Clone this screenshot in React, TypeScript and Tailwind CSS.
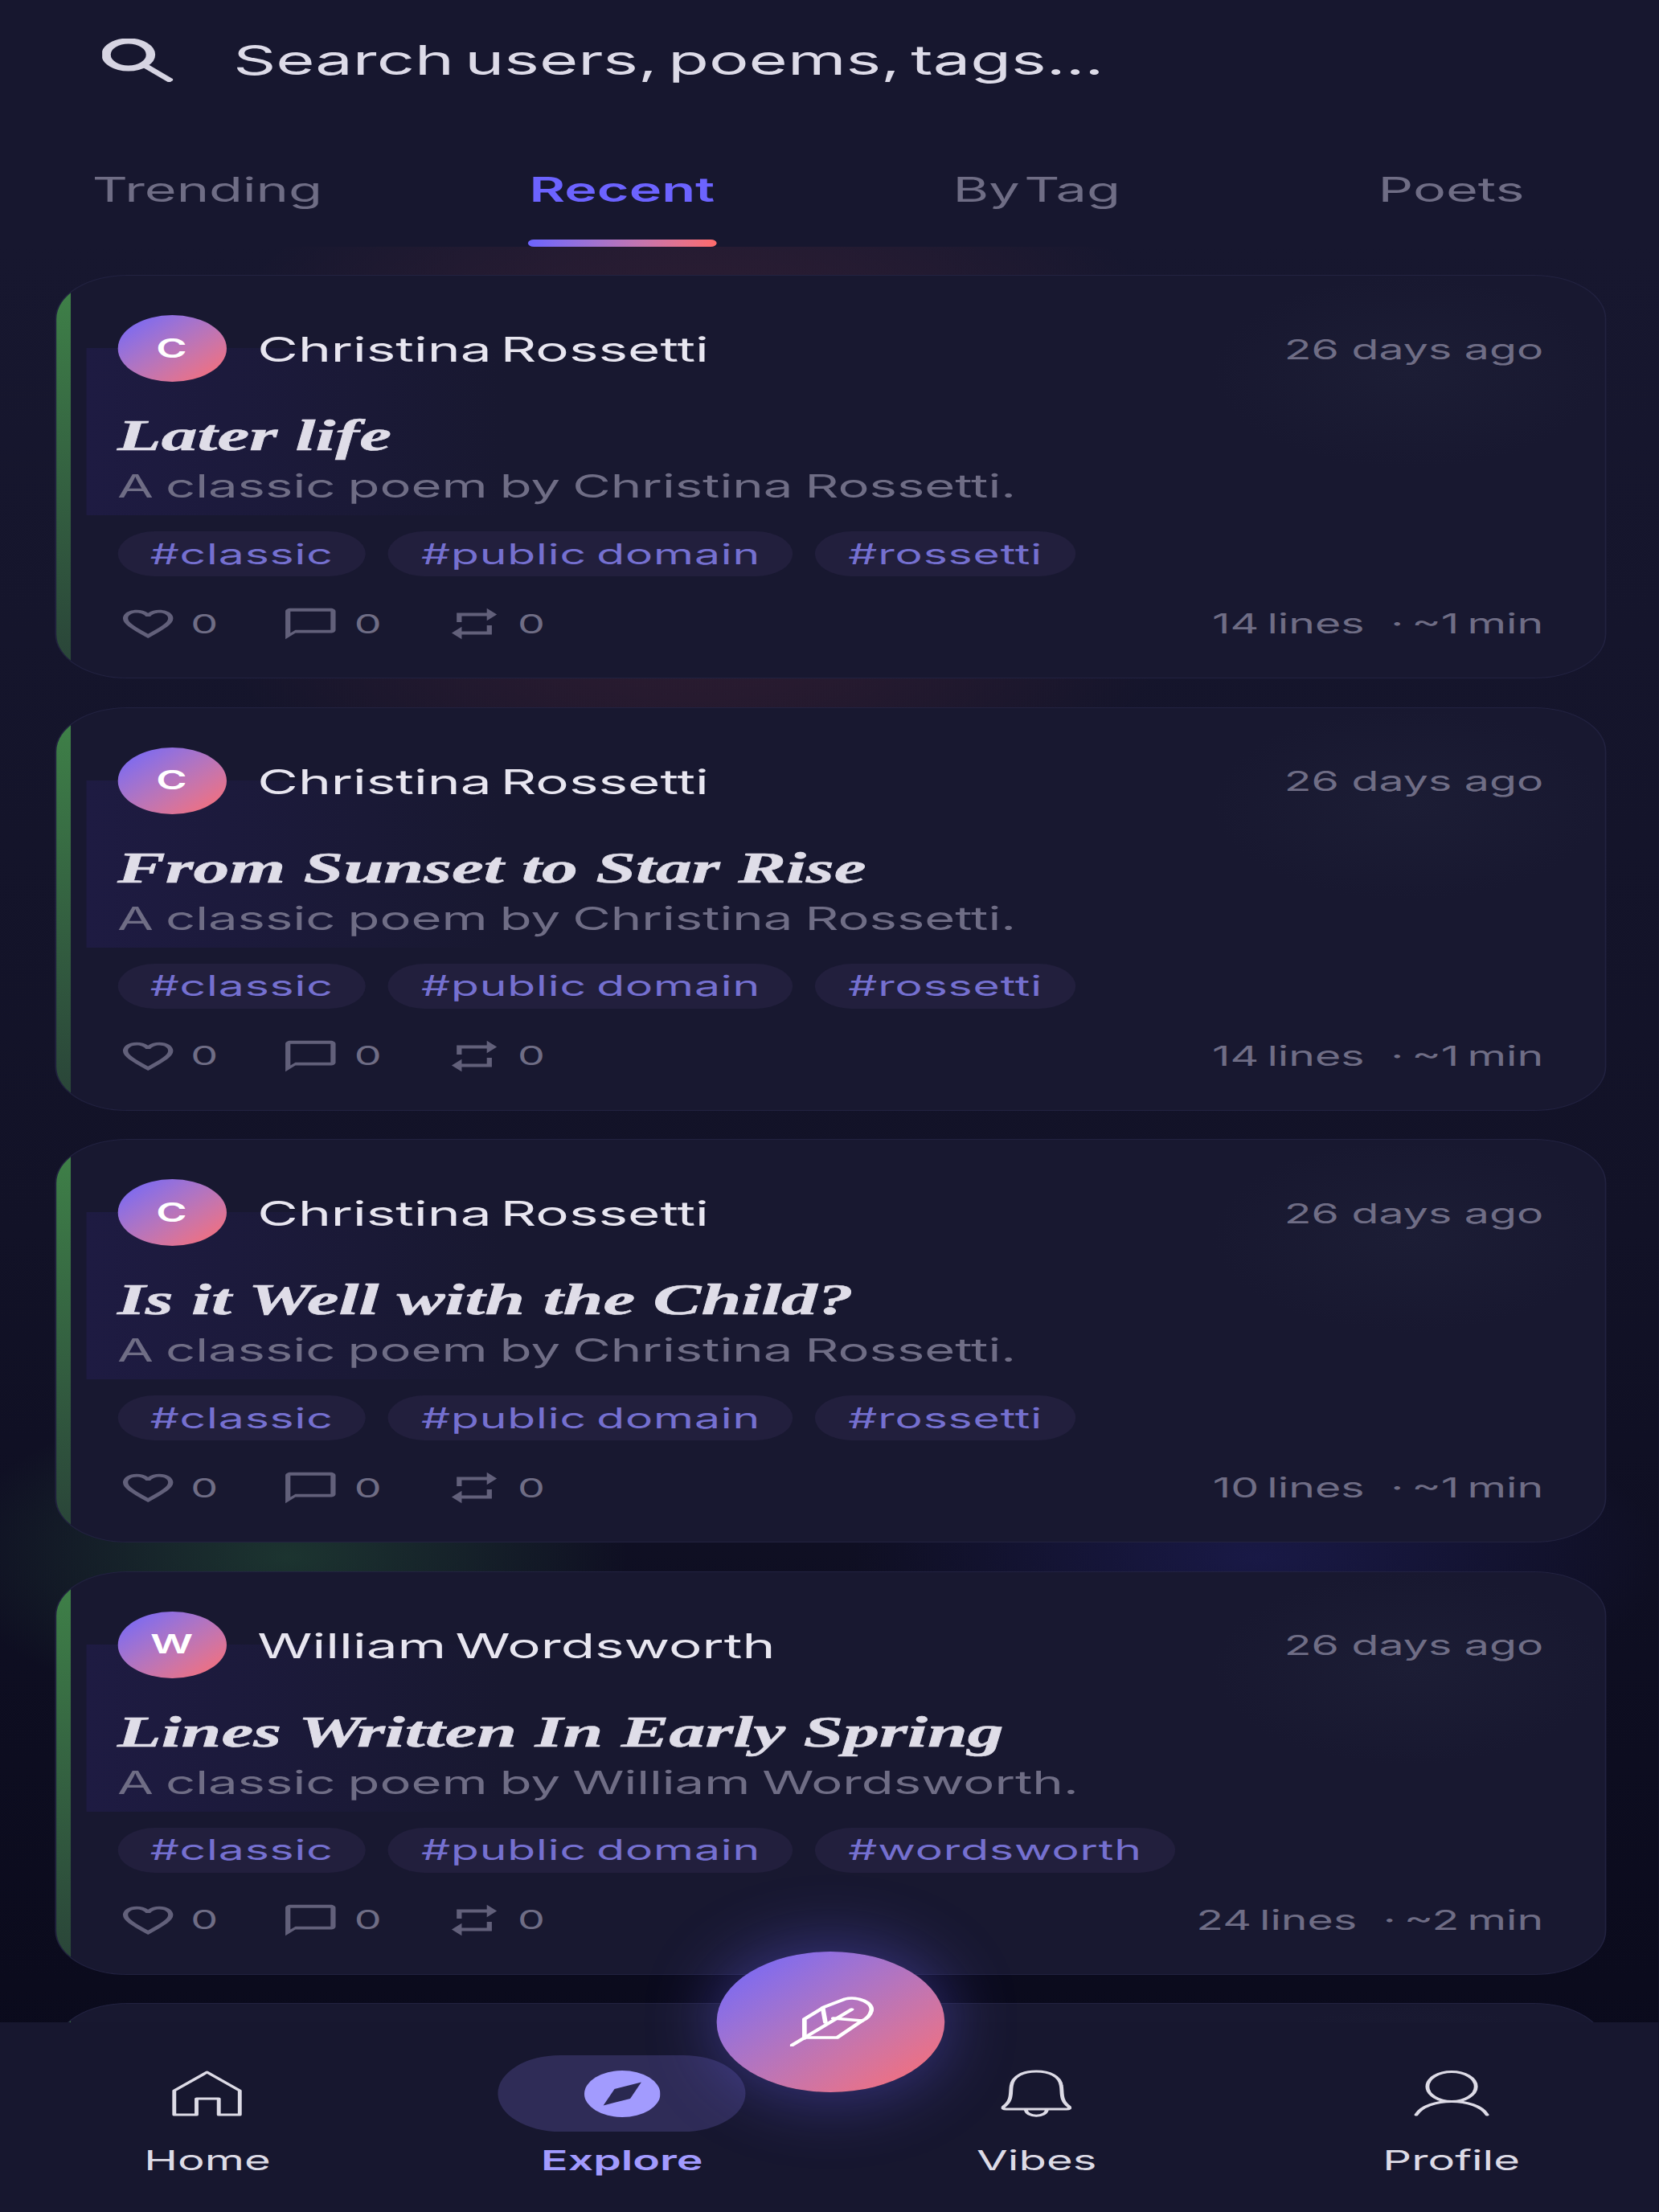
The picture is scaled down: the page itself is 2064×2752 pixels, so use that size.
import { MdFavoriteBorder, MdChatBubbleOutline, MdRepeat } from "react-icons/md";

const sans = "font-['Inter','Liberation_Sans',sans-serif]";

type Post = { name: string; initial: string; title: string; author: string; third: string; lines: string; dot: string };

const posts: Post[] = [
  { name: "Christina Rossetti", initial: "C", title: "Later life", author: "Christina Rossetti", third: "#rossetti", lines: "14 lines", dot: "~1 min" },
  { name: "Christina Rossetti", initial: "C", title: "From Sunset to Star Rise", author: "Christina Rossetti", third: "#rossetti", lines: "14 lines", dot: "~1 min" },
  { name: "Christina Rossetti", initial: "C", title: "Is it Well with the Child?", author: "Christina Rossetti", third: "#rossetti", lines: "10 lines", dot: "~1 min" },
  { name: "William Wordsworth", initial: "W", title: "Lines Written In Early Spring", author: "William Wordsworth", third: "#wordsworth", lines: "24 lines", dot: "~2 min" },
];

function Tag({ children }: { children: string }) {
  return (
    <span className="flex h-[56px] items-center rounded-full bg-[#221f3d] px-[25px] text-[35px] leading-none tracking-[0.015em] text-[#7570d0] [word-spacing:-0.08em]">
      {children}
    </span>
  );
}

function Stat({ icon }: { icon: React.ReactNode }) {
  return (
    <div className="flex items-center gap-[10px]">
      {icon}
      <span className="text-[33px] leading-none text-[#6f6d85]">0</span>
    </div>
  );
}

function CardShell({ children }: { children?: React.ReactNode }) {
  return (
    <article className="relative h-[502px] shrink-0 overflow-hidden rounded-[55px] border border-[#222240] bg-[#181830]">
      <div className="absolute top-0 bottom-0 left-0 w-[11px] bg-gradient-to-b from-[#3f8248] to-[#294338]" />
      <div className="absolute top-[90px] left-[23px] h-[208px] w-[320px] bg-gradient-to-r from-[#1e1b42] to-transparent" />
      <div className="absolute top-0 right-0 h-[240px] w-[300px] bg-[radial-gradient(closest-side,#1c1d35,transparent)]" />
      {children}
    </article>
  );
}

function Card({ p }: { p: Post }) {
  return (
    <CardShell>
      <div className="relative flex h-full flex-col pt-[49px] pr-[47px] pl-[46.5px]">
        <div className="flex h-[83px] items-center">
          <div className="flex h-[83px] w-[83px] items-center justify-center rounded-full bg-gradient-to-br from-[#6c63ff] to-[#ff6b6b] text-[32px] font-semibold text-white">
            {p.initial}
          </div>
          <span className="mt-[4px] ml-[24px] text-[42.5px] leading-none text-[#e8e6f0] [word-spacing:-0.12em]">{p.name}</span>
          <span className="mt-[2px] ml-auto text-[34px] leading-none text-[#6f6d85]">26 days ago</span>
        </div>
        <h2 className="mt-[37px] h-[60px] font-['Liberation_Serif',serif] text-[55px] leading-[60px] font-bold text-[#dfdde8] italic [-webkit-text-stroke:0.6px_#dfdde8]">
          {p.title}
        </h2>
        <p className="mt-[10px] h-[46px] text-[40px] leading-[46px] text-[#6f6d85] [word-spacing:-0.05em]">A classic poem by {p.author}.</p>
        <div className="mt-[33px] flex gap-[17px]">
          <Tag>#classic</Tag>
          <Tag>#public domain</Tag>
          <Tag>{p.third}</Tag>
        </div>
        <div className="mt-[34px] flex h-[50px] items-center">
          <div className="flex items-center gap-[48px]">
            <Stat icon={<MdFavoriteBorder size={46} color="#62607a" />} />
            <Stat icon={<MdChatBubbleOutline size={46} color="#62607a" />} />
            <Stat icon={<MdRepeat size={46} color="#62607a" />} />
          </div>
          <span className="ml-auto text-[34px] leading-none text-[#6f6d85] [word-spacing:-0.1em]">
            {p.lines}
            <span className="ml-[20px]">·</span> {p.dot}
          </span>
        </div>
      </div>
    </CardShell>
  );
}

function NavItem({ icon, label, active }: { icon: React.ReactNode; label: string; active?: boolean }) {
  return (
    <div className="flex flex-col items-center pt-[41px]">
      <div
        className={
          active
            ? "flex h-[95px] w-[189px] items-center justify-center rounded-full bg-[#2f2c57]"
            : "flex h-[95px] w-[189px] items-center justify-center"
        }
      >
        {icon}
      </div>
      <span
        className={
          active
            ? "mt-[14px] text-[34px] leading-[44px] font-semibold text-[#a29bfe]"
            : "mt-[14px] text-[34.5px] leading-[44px] text-[#dddbe6]"
        }
      >
        {label}
      </span>
    </div>
  );
}

export default function App() {
  return (
    <div className="relative h-[2752px] w-[2064px] overflow-hidden bg-[#17172f]">
      <div className={`relative h-[2752px] w-[1266px] origin-top-left scale-x-[1.63] ${sans}`}>
        {/* header */}
        <header className="relative z-10 bg-[#17172f]">
          <div className="flex h-[150px] items-center pl-[78px]">
            <svg width="54" height="54" viewBox="0 0 54 54" fill="none" className="mt-[14px] -translate-y-[7px]">
              <circle cx="20" cy="20" r="17" stroke="#d6d4e2" strokeWidth="7" />
              <path d="M32 33 L53 53" stroke="#d6d4e2" strokeWidth="5.5" />
            </svg>
            <span className="ml-[46px] text-[50.8px] leading-none text-[#dddbe8] [word-spacing:-0.12em]">Search users, poems, tags...</span>
          </div>
          <nav className="grid h-[157px] grid-cols-4 text-[42px] leading-[50px]">
            {["Trending", "Recent", "By Tag", "Poets"].map((t) => (
              <div key={t} className="flex flex-col items-center pt-[61px]">
                <span className={t === "Recent" ? "font-semibold text-[#6c63ff]" : "text-[#6f6d85] [word-spacing:-0.2em]"}>{t}</span>
                {t === "Recent" && (
                  <div className="mt-[37px] h-[9px] w-[144px] rounded-full bg-gradient-to-r from-[#6c63ff] to-[#ff6b6b]" />
                )}
              </div>
            ))}
          </nav>
        </header>

        {/* feed */}
        <main className="relative h-[2445px] overflow-hidden bg-gradient-to-b from-[#17172f] via-[#121227] to-[#09091a]">
          <div className="absolute top-[-200px] left-[130px] h-[1000px] w-[800px] bg-[radial-gradient(closest-side,rgba(255,90,90,0.16),transparent)]" />
          <div className="absolute top-[1430px] left-[-40px] h-[400px] w-[520px] bg-[radial-gradient(closest-side,rgba(70,170,90,0.24),transparent)]" />
          <div className="absolute top-[1430px] left-[650px] h-[400px] w-[620px] bg-[radial-gradient(closest-side,rgba(70,70,230,0.18),transparent)]" />
          <div className="relative flex flex-col gap-[35.5px] pt-[35px] pr-[40px] pl-[42px]">
            {posts.map((p) => (
              <Card key={p.title} p={p} />
            ))}
            <CardShell />
          </div>
        </main>

        {/* bottom navigation */}
        <footer className="absolute right-0 bottom-0 left-0 z-20 grid h-[236px] grid-cols-4 bg-[#17172f]">
          <NavItem
            label="Home"
            icon={
              <svg width="54" height="57" viewBox="0 0 54 57" fill="none" stroke="#dddbe6" strokeWidth="3">
                <path d="M2 55 V25 L27 2 L52 25 V55 H36 V35 H19 V55 Z" strokeLinejoin="round" />
              </svg>
            }
          />
          <NavItem
            active
            label="Explore"
            icon={
              <svg width="58" height="58" viewBox="-29 -29 58 58">
                <circle r="29" fill="#a29bfe" />
                <polygon points="14.5,-14.5 -6,-6 -14.5,14.5 6,6" fill="#2a2850" />
              </svg>
            }
          />
          <NavItem
            label="Vibes"
            icon={
              <svg width="54" height="60" viewBox="0 0 54 60" fill="none" stroke="#dddbe6" strokeWidth="3" strokeLinejoin="round">
                <path d="M2 46 C9 38 7 28 8 20 C9 8 17 2 27 2 C37 2 45 8 46 20 C47 28 45 38 52 46 C53 48 52 49 50 49 H4 C2 49 1 48 2 46 Z" />
                <path d="M19 49 C19 60 35 60 35 49" />
              </svg>
            }
          />
          <NavItem
            label="Profile"
            icon={
              <svg width="58" height="57" viewBox="0 0 58 57" fill="none" stroke="#dddbe6" strokeWidth="3" strokeLinecap="round">
                <circle cx="29" cy="20" r="18.5" />
                <path d="M2 55 C10 33 48 33 56 55" />
              </svg>
            }
          />
        </footer>

        {/* compose button */}
        <button className="absolute top-[2428px] left-[547px] z-30 flex h-[175px] w-[174px] items-center justify-center rounded-full bg-gradient-to-br from-[#6c63ff] to-[#ff6b6b] shadow-[0_0_70px_rgba(108,99,255,0.45)]">
          <svg width="64" height="62" viewBox="0 0 64 62" fill="none" stroke="#fff" strokeWidth="3.5" strokeLinecap="round" strokeLinejoin="round" className="-mt-[2px] ml-[2px]">
            <path d="M1 61 L47 16" />
            <path d="M11 52 V28 L26 13 L42 3 C52 -1 64 8 62 18 C61 24 58 28 55 30 L36 51 H11" />
            <path d="M25 14 L27 32" />
            <path d="M33 27 L55 30" />
          </svg>
        </button>
      </div>
    </div>
  );
}
